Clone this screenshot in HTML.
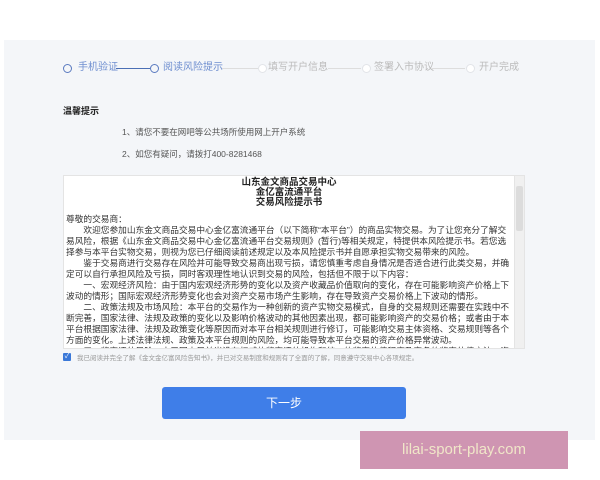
<!DOCTYPE html>
<html><head><meta charset="utf-8"><style>
*{margin:0;padding:0;box-sizing:border-box}
body{width:600px;height:480px;background:#fff;font-family:"Liberation Sans","Noto Sans CJK SC",sans-serif;position:relative;overflow:hidden}
.panel{position:absolute;left:4px;top:40px;width:591px;height:400px;background:#f4f6f9}
.step{position:absolute;top:62px;font-size:10px;line-height:12px;color:#bbb}
.c{position:absolute;top:64px;width:9px;height:9px;border-radius:50%;border:1.5px solid #5a7ac0;background:#f4f6f9}
.c.g{border:1px solid #e2e4e8;background:#fff}
.ln{position:absolute;top:67.5px;height:1px;background:#ddd}
.doc{position:absolute;left:63px;top:175px;width:462px;height:174px;background:#fff;border:1px solid #e4e4e4;overflow:hidden}
.doc .t{text-align:center;font-weight:bold;font-size:9.5px;line-height:10px;color:#222;margin-top:2px;padding-right:10px}
.doc .b{font-size:8.7px;line-height:11px;color:#333;padding:6px 12px 0 2px}
.doc .b p{text-indent:2em}
.sb{position:absolute;right:0;top:0;width:10px;height:100%;background:#f0f0f0;border-left:1px solid #e4e4e4}
.sb i{position:absolute;left:1px;top:10px;width:7px;height:45px;background:#dcdcdc;border-radius:2px}
</style></head><body>
<div class="panel"></div>
<div class="c" style="left:63px"></div>
<div class="ln" style="left:116px;width:34px;background:#4a6fb5;height:1.5px"></div>
<div class="c" style="left:150px"></div>
<div class="ln" style="left:222px;width:36px"></div>
<div class="c g" style="left:258px"></div>
<div class="ln" style="left:328px;width:33px"></div>
<div class="c g" style="left:362px"></div>
<div class="ln" style="left:432px;width:33px"></div>
<div class="c g" style="left:466px"></div>
<div class="step" style="left:78px;color:#6f8fd0">手机验证</div>
<div class="step" style="left:163px;color:#6f8fd0">阅读风险提示</div>
<div class="step" style="left:268px">填写开户信息</div>
<div class="step" style="left:374px">签署入市协议</div>
<div class="step" style="left:479px">开户完成</div>
<div style="position:absolute;left:63px;top:104px;font-size:9px;font-weight:bold;color:#222">温馨提示</div>
<div style="position:absolute;left:122px;top:126px;font-size:8.5px;color:#555">1、请您不要在网吧等公共场所使用网上开户系统</div>
<div style="position:absolute;left:122px;top:148px;font-size:8.5px;color:#555">2、如您有疑问，请拨打400-8281468</div>
<div class="doc">
<div class="t">山东金文商品交易中心<br>金亿富流通平台<br>交易风险提示书</div>
<div class="b">尊敬的交易商：
<p>欢迎您参加山东金文商品交易中心金亿富流通平台（以下简称“本平台”）的商品实物交易。为了让您充分了解交易风险，根据《山东金文商品交易中心金亿富流通平台交易规则》(暂行)等相关规定，特提供本风险提示书。若您选择参与本平台实物交易，则视为您已仔细阅读前述规定以及本风险提示书并自愿承担实物交易带来的风险。</p>
<p>鉴于交易商进行交易存在风险并可能导致交易商出现亏损，请您慎重考虑自身情况是否适合进行此类交易，并确定可以自行承担风险及亏损，同时客观理性地认识到交易的风险，包括但不限于以下内容：</p>
<p>一、宏观经济风险：由于国内宏观经济形势的变化以及资产收藏品价值取向的变化，存在可能影响资产价格上下波动的情形；国际宏观经济形势变化也会对资产交易市场产生影响，存在导致资产交易价格上下波动的情形。</p>
<p>二、政策法规及市场风险：本平台的交易作为一种创新的资产实物交易模式，自身的交易规则还需要在实践中不断完善，国家法律、法规及政策的变化以及影响价格波动的其他因素出现，都可能影响资产的交易价格；或者由于本平台根据国家法律、法规及政策变化等原因而对本平台相关规则进行修订，可能影响交易主体资格、交易规则等各个方面的变化。上述法律法规、政策及本平台规则的风险，均可能导致本平台交易的资产价格异常波动。</p>
<p>三、鉴定评估风险：由于国内目前尚没有权威的鉴定评估机构和统一的鉴定估值程序及完备的鉴定估值方法，资产鉴定估值易因为不同的专家因素等，不应为交易商主张其他相关的依据。</p>
</div>
<div class="sb"><i></i></div>
</div>
<div style="position:absolute;left:63px;top:353px;width:8px;height:8px;background:#3a78d8;border-radius:1px;color:#fff;font-size:7px;line-height:8px;text-align:center">✓</div>
<div style="position:absolute;left:77px;top:352px;font-size:6.5px;color:#999;white-space:nowrap">我已阅读并完全了解《金文金亿富风险告知书》，并已对交易制度和规则有了全面的了解，同意遵守交易中心各项规定。</div>
<div style="position:absolute;left:162px;top:387px;width:244px;height:32px;background:#3f7ee8;border-radius:3px;color:#fff;font-size:12px;line-height:32px;text-align:center">下一步</div>
<div style="position:absolute;left:360px;top:431px;width:208px;height:38px;background:#cf95b2;color:#f0e6c8;font-size:15px;line-height:38px;text-align:center">lilai-sport-play.com</div>
</body></html>
